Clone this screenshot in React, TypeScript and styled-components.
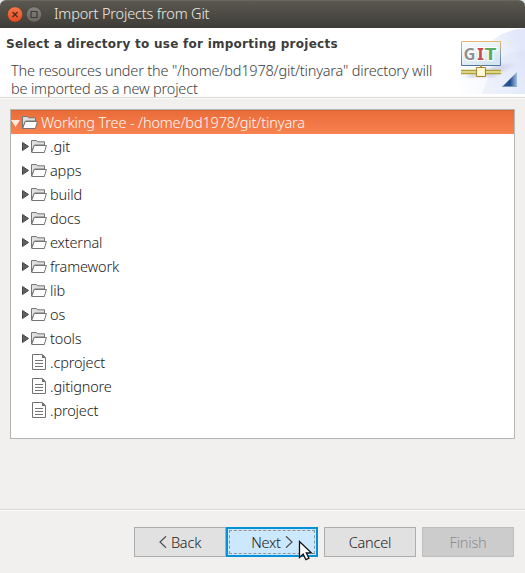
import React from 'react';
import styled, { createGlobalStyle, css } from 'styled-components';

const GlobalStyle = createGlobalStyle`
  * { box-sizing: border-box; }
  body { margin: 0; background: #f1f0ee; overflow: hidden; }
  svg { display: block; flex: none; }
`;

const Dialog = styled.div`
  position: relative;
  display: flex;
  flex-direction: column;
  width: 525px;
  height: 573px;
  background: #f1f0ee;
  color: #202020;
  font-family: 'Noto Sans', sans-serif;
  font-size: 14.5px;
  font-weight: 300;
  white-space: nowrap;
`;

const Corners = styled.div`
  background: #e2e6e6;
`;

const TitleBar = styled.header`
  display: flex;
  align-items: center;
  gap: 3px;
  height: 28px;
  padding-left: 7px;
  border-radius: 6px 6px 0 0;
  border-top: 1px solid #68665d;
  background: linear-gradient(#5a5850, #3d3c37);
`;

const Title = styled.h1`
  margin: 0 0 2px 9px;
  color: #f0ece3;
  font-size: 14.5px;
  line-height: 25px;
  font-weight: 300;
  letter-spacing: -0.17px;
`;

const Banner = styled.section`
  display: flex;
  justify-content: space-between;
  height: 70px;
  background: #fff;
  border-bottom: 1px solid #d9d9d7;
  box-shadow: 0 1px #fbfbfa;
`;

const BannerText = styled.div`
  padding: 8px 0 0 6px;
`;

const Heading = styled.h2`
  margin: 0;
  font: bold 12px/17px 'DejaVu Sans', sans-serif;
  letter-spacing: 0.26px;
  color: #3c3c3c;
`;

const Description = styled.p`
  margin: 8px 0 0 5px;
  line-height: 18px;
  color: #404040;
  letter-spacing: -0.18px;
`;

const Tree = styled.ul`
  list-style: none;
  margin: 11px 10px 0;
  padding: 0;
  height: 330px;
  border: 1px solid #b5b5b2;
  background: #fff;
`;

const TreeRow = styled.li<{ $root?: boolean }>`
  display: flex;
  align-items: center;
  height: 24px;
  padding-left: ${(p) => (p.$root ? 0 : 10)}px;
  ${(p) =>
    p.$root &&
    css`
      color: #fffaf7;
      background: linear-gradient(#e96c38, #f88251);
      box-shadow: inset 0 1px #db6635;
    `}
`;

const Label = styled.span`
  margin-left: 3px;
  line-height: 24px;
  letter-spacing: -0.15px;
`;

const Footer = styled.footer`
  display: flex;
  height: 64px;
  margin-top: auto;
  padding: 17px 0 0 134px;
  border-top: 1px solid #d9d9d7;
  box-shadow: inset 0 1px #fcfcfb;
`;

const Button = styled.button<{ $gap?: boolean }>`
  display: flex;
  align-items: center;
  justify-content: center;
  gap: 4px;
  width: 92px;
  height: 30px;
  margin: 0 0 0 ${(p) => (p.$gap ? 6 : 0)}px;
  padding: 0;
  border: 1px solid #adadad;
  background: #e1e1e1;
  color: #202020;
  font: inherit;
  letter-spacing: -0.2px;
  &:disabled { background: #ccc; border-color: #bfbfbf; color: #8c8c8c; }
`;

const DefaultButton = styled(Button)`
  border: 2px solid #0590d8;
  background: #cce8ff;
  outline: 1px dashed #929292;
  outline-offset: -4px;
`;

const Pointer = styled.svg`
  position: absolute;
  left: 298px;
  top: 540px;
`;

const WindowButton = ({ close }: { close?: boolean }) => (
  <svg width="16" height="17" viewBox="0 0 16 17">
    <defs>
      <linearGradient id={close ? 'closeFill' : 'maxFill'} x2="0" y2="1">
        <stop stopColor={close ? '#f5794b' : '#85837b'} />
        <stop offset="1" stopColor={close ? '#e34a20' : '#68665f'} />
      </linearGradient>
    </defs>
    <circle cx="8" cy="8.5" r="7.7" fill={`url(#${close ? 'closeFill' : 'maxFill'})`} stroke="#383731" strokeWidth=".5" />
    {close ? (
      <path d="M5.5 6l5 5M10.5 6l-5 5" stroke="#49291d" strokeWidth="1.2" />
    ) : (
      <path d="M5 5.5h6v6H5z" fill="none" stroke="#3c3b36" strokeWidth="1.2" />
    )}
  </svg>
);

const Arrow = ({ open }: { open?: boolean }) =>
  open ? (
    <svg width="11" height="12" viewBox="0 0 11 12">
      <path d="M0 4h9L4.5 11z" fill="#ffe9de" />
    </svg>
  ) : (
    <svg width="10" height="12" viewBox="0 0 10 12">
      <path d="M1.5 2.5v8L7.5 6.5z" fill="#606060" stroke="#464646" />
    </svg>
  );

const Folder = () => (
  <svg width="16" height="15" viewBox="0 0 16 15">
    <path d="M.5 13V1.5h5l1 1.3h7V6H3.5z" fill="#dfdfdf" stroke="#747474" />
    <path d="M3.2 6.5h12.2l-2 7H.7z" fill="#fff" stroke="#747474" />
  </svg>
);

const FileIcon = () => (
  <svg width="26" height="18" viewBox="0 0 26 18">
    <path d="M11.5 1.5h10l3 3v12h-13z" fill="#fff" stroke="#747474" />
    <path d="M21 1v4h4z" fill="#747474" />
    <path d="M14 7.5h8M14 10.5h8M14 13.5h8" stroke="#747474" />
  </svg>
);

const GitBanner = () => (
  <svg width="75" height="66" viewBox="0 0 75 66">
    <defs>
      <linearGradient id="wash" x1="0" y1=".8" x2="1" y2=".4">
        <stop stopColor="#fff" />
        <stop offset=".6" stopColor="#f3f6fd" />
        <stop offset="1" stopColor="#e2e8f9" />
      </linearGradient>
      <linearGradient id="sky" x2=".6" y2="1">
        <stop stopColor="#fbfdfe" />
        <stop offset="1" stopColor="#d4e6f1" />
      </linearGradient>
      <linearGradient id="frame" x2="0" y2="1">
        <stop stopColor="#e7b76d" />
        <stop offset=".5" stopColor="#8fa0ad" />
        <stop offset="1" stopColor="#5376a1" />
      </linearGradient>
      <linearGradient id="fold" x2="1">
        <stop stopColor="#2c5697" />
        <stop offset=".55" stopColor="#244f8e" />
        <stop offset="1" stopColor="#a3c3e4" />
      </linearGradient>
      <linearGradient id="shade" x2="1">
        <stop stopColor="#8f86a8" stopOpacity=".5" />
        <stop offset="1" stopColor="#aaa4c8" stopOpacity=".15" />
      </linearGradient>
      <filter id="soft"><feGaussianBlur stdDeviation="1.4" /></filter>
    </defs>
    <path d="M2 66C7 44 24 24 47 9Q58 2 75 0V66z" fill="url(#wash)" />
    <path d="M43 37Q51 25 75 22V66H32z" fill="#d5def6" opacity=".3" />
    <path d="M14 49L52 36h15L44 49z" fill="url(#shade)" filter="url(#soft)" />
    <path d="M11.5 13.5h39v24h-39z" fill="url(#sky)" stroke="url(#frame)" />
    <g fontFamily="Noto Sans" fontWeight="700" fontSize="16" stroke="#fff" strokeWidth="2" paintOrder="stroke">
      <text x="13.5" y="32" fill="#919191" textLength="12" lengthAdjust="spacingAndGlyphs">G</text>
      <text x="27" y="32" fill="#c94b52" textLength="7" lengthAdjust="spacingAndGlyphs">I</text>
      <text x="34.5" y="32" fill="#5bab65" textLength="12" lengthAdjust="spacingAndGlyphs">T</text>
    </g>
    <path d="M11 42h40v4H11z" fill="#eee8a0" />
    <path d="M11 42.5h40M11 45.5h40" stroke="#b0a13c" strokeWidth="1.3" />
    <path d="M31 37v3" stroke="#a79542" strokeWidth="2" />
    <path d="M26.5 39.5h9v9h-9z" fill="#fff5bd" stroke="#a88730" />
    <path d="M28 41h6v6h-6z" fill="#fffbe0" />
    <path d="M52 59L67 44v15z" fill="url(#fold)" />
    <path d="M53 58.5h14" stroke="#8ba8cc" strokeWidth=".8" />
  </svg>
);

const Chevron = ({ next }: { next?: boolean }) => (
  <svg width="8" height="12" viewBox="0 0 8 12">
    <path d={next ? 'M1 .3L7 6 1 11.7' : 'M7 .3L1 6l6 5.7'} fill="none" stroke="#4c4c4c" strokeWidth="1.2" />
  </svg>
);

const folders = ['.git', 'apps', 'build', 'docs', 'external', 'framework', 'lib', 'os', 'tools'];
const files = ['.cproject', '.gitignore', '.project'];

export default function App() {
  return (
    <Dialog>
      <GlobalStyle />
      <Corners>
        <TitleBar>
          <WindowButton close />
          <WindowButton />
          <Title>Import Projects from Git</Title>
        </TitleBar>
      </Corners>
      <Banner>
        <BannerText>
          <Heading>Select a directory to use for importing projects</Heading>
          <Description>
            The resources under the "/home/bd1978/git/tinyara" directory will
            <br />
            be imported as a new project
          </Description>
        </BannerText>
        <GitBanner />
      </Banner>
      <Tree>
        <TreeRow $root>
          <Arrow open />
          <Folder />
          <Label>Working Tree - /home/bd1978/git/tinyara</Label>
        </TreeRow>
        {folders.map((name) => (
          <TreeRow key={name}>
            <Arrow />
            <Folder />
            <Label>{name}</Label>
          </TreeRow>
        ))}
        {files.map((name) => (
          <TreeRow key={name}>
            <FileIcon />
            <Label>{name}</Label>
          </TreeRow>
        ))}
      </Tree>
      <Footer>
        <Button><Chevron />Back</Button>
        <DefaultButton>Next<Chevron next /></DefaultButton>
        <Button $gap>Cancel</Button>
        <Button $gap disabled>Finish</Button>
      </Footer>
      <Pointer width="15" height="22" viewBox="0 0 15 22">
        <path d="M1.5 1.5v16l3.7-3.4 2.7 5.6 3-1.4-2.6-5.4h5z" fill="#fff" stroke="#111" strokeWidth="1.3" />
      </Pointer>
    </Dialog>
  );
}
